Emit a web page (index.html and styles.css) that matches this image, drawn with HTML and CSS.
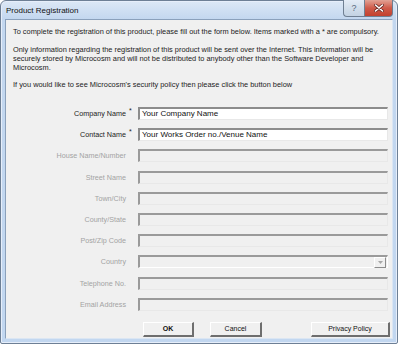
FILE: index.html
```html
<!DOCTYPE html>
<html>

<head>
    <link rel="stylesheet" href="styles.css">
</head>

<body>
    <div class="window">
        <div class="titlebar">
            <span class="title">Product Registration</span>
            <div class="caption">
                <div class="cap help">?</div>
                <div class="cap close">
                    <svg width="10" height="8" viewBox="0 0 10 8">
                        <path d="M1.5 1 L8.5 7 M8.5 1 L1.5 7" stroke="#6b2a24" stroke-width="3" stroke-linecap="round" />
                        <path d="M1.5 1 L8.5 7 M8.5 1 L1.5 7" stroke="#fff" stroke-width="1.6" stroke-linecap="round" />
                    </svg>
                </div>
            </div>
        </div>

        <div class="client">
            <p>To complete the registration of this product, please fill out the form below. Items marked with a * are compulsory.</p>
            <p>Only information regarding the registration of this product will be sent over the Internet. This information will be securely stored by Microcosm and will not be distributed to anybody other than the Software Developer and Microcosm.</p>
            <p>If you would like to see Microcosm's security policy then please click the button below</p>

            <div class="form">
                <span class="lbl">Company Name</span><span class="req">*</span>
                <div class="field">Your Company Name</div>

                <span class="lbl">Contact Name</span><span class="req">*</span>
                <div class="field">Your Works Order no./Venue Name</div>

                <span class="lbl off">House Name/Number</span><span></span>
                <div class="field off"></div>

                <span class="lbl off">Street Name</span><span></span>
                <div class="field off"></div>

                <span class="lbl off">Town/City</span><span></span>
                <div class="field off"></div>

                <span class="lbl off">County/State</span><span></span>
                <div class="field off"></div>

                <span class="lbl off">Post/Zip Code</span><span></span>
                <div class="field off"></div>

                <span class="lbl off">Country</span><span></span>
                <div class="field off combo">
                    <span class="drop">
                        <svg width="5" height="3" viewBox="0 0 5 3"><path d="M0 0 H5 L2.5 3 Z" fill="#a8a8a8" /></svg>
                    </span>
                </div>

                <span class="lbl off">Telephone No.</span><span></span>
                <div class="field off"></div>

                <span class="lbl off">Email Address</span><span></span>
                <div class="field off"></div>
            </div>

            <div class="buttons">
                <div class="btn ok">OK</div>
                <div class="btn cancel">Cancel</div>
                <div class="btn privacy">Privacy Policy</div>
            </div>
        </div>
    </div>
</body>

</html>
```

FILE: styles.css
```css
body {
    margin: 0;
    background: #fff;
    font-family: "Liberation Sans", Arial, sans-serif;
}

.window {
    width: 396px;
    height: 342px;
    border: 1px solid #6d7f95;
    border-radius: 6px 6px 2px 2px;
    background: linear-gradient(#dce8f6, #c3d7ef 18px, #c2d7f0);
    display: flex;
    flex-direction: column;
    box-shadow: inset 0 0 0 1px #e6eefa;
}

.titlebar {
    height: 18px;
    display: flex;
    align-items: flex-start;
    justify-content: space-between;
}

.title {
    font-size: 8px;
    color: #111;
    margin: 5px 0 0 5px;
    line-height: 9px;
}

.caption {
    display: flex;
    margin-right: 4px;
    margin-top: -1px;
}

.cap {
    height: 16px;
    border: 1px solid #6f7f92;
    border-top: none;
    display: flex;
    align-items: center;
    justify-content: center;
}

.help {
    width: 20px;
    border-radius: 0 0 0 4px;
    border-right: none;
    background: linear-gradient(#e4ecf6, #d2deeb 50%, #c3d2e3);
    font-size: 9px;
    color: #5a6b80;
}

.close {
    width: 27px;
    border-radius: 0 0 4px 0;
    background: linear-gradient(#e2a294, #cf5b4a 50%, #c2412f);
}

.client {
    flex: 1;
    margin: 0 4px 4px 4px;
    border: 1px solid #8aa0bb;
    border-right-color: #dbe6f3;
    border-bottom-color: #dbe6f3;
    background: #f0f0f0;
    padding: 7px 0 0 7px;
}

.client p {
    margin: 0 0 8.5px 0;
    font-size: 7.4px;
    line-height: 9px;
    color: #222;
    width: 376px;
}

.form {
    display: grid;
    grid-template-columns: 113px 12px 250px;
    grid-auto-rows: 13px;
    row-gap: 8.2px;
    margin-top: 18px;
    align-items: center;
}

.lbl {
    text-align: right;
    font-size: 7.2px;
    color: #222;
}

.lbl.off {
    color: #a3a3a3;
}

.req {
    font-size: 7px;
    color: #222;
    align-self: start;
    padding: 0 0 0 3px;
    line-height: 8px;
}

.field {
    height: 13px;
    box-sizing: border-box;
    border-top: 2px solid #8c8c8c;
    border-left: 2px solid #8c8c8c;
    border-right: 1px solid #e8e8e8;
    border-bottom: 1px solid #e8e8e8;
    background: #fff;
    font-size: 8px;
    line-height: 10px;
    padding-left: 2px;
    color: #111;
}

.field.off {
    background: #f0f0f0;
    border-top-color: #9a9a9a;
    border-left-color: #9a9a9a;
}

.combo {
    display: flex;
    justify-content: flex-end;
    padding: 0;
    border-right-color: #fff;
    border-bottom-color: #fff;
}

.drop {
    width: 10px;
    height: 9px;
    margin: 0 1px 0 0;
    border: 1px solid #fff;
    border-right-color: #8c8c8c;
    border-bottom-color: #8c8c8c;
    background: #f0f0f0;
    display: flex;
    align-items: center;
    justify-content: center;
}

.buttons {
    display: flex;
    margin: 11.5px 0 0 130px;
}

.btn {
    height: 15px;
    box-sizing: border-box;
    border: 1px solid #fff;
    border-right: 2px solid #6e6e6e;
    border-bottom: 2px solid #6e6e6e;
    background: #f0f0f0;
    font-size: 7px;
    line-height: 12px;
    text-align: center;
    color: #111;
}

.ok {
    width: 51px;
    font-weight: bold;
}

.cancel {
    width: 52px;
    margin-left: 16px;
}

.privacy {
    width: 79px;
    margin-left: 49px;
}
```
